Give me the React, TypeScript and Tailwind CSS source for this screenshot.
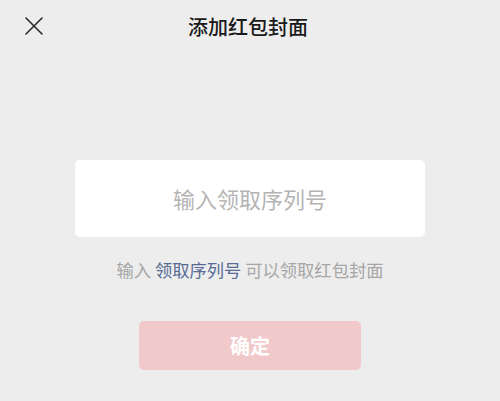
import React from "react";

export default function App() {
  return (
    <div
      className="w-[500px] h-[401px] bg-[#ededed] flex flex-col"
      style={{ fontFamily: '"Noto Sans CJK SC", "Noto Sans", sans-serif' }}
    >
      <div className="relative h-[53px] flex items-center justify-center">
        <svg
          className="absolute left-[25px] top-[17px]"
          width="18"
          height="18"
          viewBox="0 0 18 18"
          fill="none"
          stroke="#2a2a2a"
          strokeWidth="1.6"
          strokeLinecap="round"
        >
          <path d="M1 1 L17 17 M17 1 L1 17" />
        </svg>
        <div className="text-[20px] font-medium text-[#1a1a1a] leading-none pr-[4px]">添加红包封面</div>
      </div>
      <div className="mt-[107px] mx-auto w-[350px] h-[77px] bg-white rounded-[5px] flex items-center justify-center">
        <span className="text-[22px] text-[#b4b4b4]">输入领取序列号</span>
      </div>
      <div className="mt-[22px] text-center text-[17.3px] leading-[22px] text-[#a6a6a6]">
        输入 <span className="text-[#576b95]">领取序列号</span> 可以领取红包封面
      </div>
      <div className="mt-[40px] mx-auto w-[222px] h-[49px] rounded-[5px] bg-[#f2c9cb] flex items-center justify-center">
        <span className="text-[20px] font-bold text-white">确定</span>
      </div>
    </div>
  );
}
